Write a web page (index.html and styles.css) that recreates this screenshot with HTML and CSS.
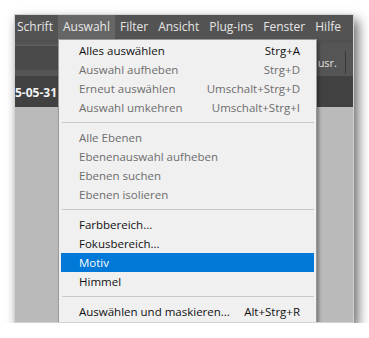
FILE: index.html
```html
<!DOCTYPE html>
<html lang="de">

<head>
    <meta charset="UTF-8">
    <meta name="viewport" content="width=device-width, initial-scale=1.0">
    <title>Auswahl</title>
    <link rel="stylesheet" href="styles.css">
</head>

<body>
    <div class="shot">
        <nav class="menubar">
            <span class="menubar-item">Schrift</span>
            <span class="menubar-item active">Auswahl</span>
            <span class="menubar-item">Filter</span>
            <span class="menubar-item">Ansicht</span>
            <span class="menubar-item">Plug-ins</span>
            <span class="menubar-item">Fenster</span>
            <span class="menubar-item">Hilfe</span>
        </nav>

        <div class="workspace">
            <div class="options-bar">
                <div class="preset-box"></div>
                <div class="options-right">
                    <span class="opt-label">usr.</span>
                    <span class="opt-divider"></span>
                </div>
            </div>
            <div class="tab-bar">
                <span class="doc-tab">5-05-31</span>
            </div>
            <div class="canvas"></div>
        </div>

        <!-- dropdown des Auswahl-Menüs liegt über dem Arbeitsbereich -->
        <ul class="dropdown">
            <li class="row"><span>Alles auswählen</span><span>Strg+A</span></li>
            <li class="row off"><span>Auswahl aufheben</span><span>Strg+D</span></li>
            <li class="row off"><span>Erneut auswählen</span><span>Umschalt+Strg+D</span></li>
            <li class="row off"><span>Auswahl umkehren</span><span>Umschalt+Strg+I</span></li>
            <li class="sep"></li>
            <li class="row off"><span>Alle Ebenen</span></li>
            <li class="row off"><span>Ebenenauswahl aufheben</span></li>
            <li class="row off"><span>Ebenen suchen</span></li>
            <li class="row off"><span>Ebenen isolieren</span></li>
            <li class="sep"></li>
            <li class="row"><span>Farbbereich...</span></li>
            <li class="row"><span>Fokusbereich...</span></li>
            <li class="row selected"><span>Motiv</span></li>
            <li class="row"><span>Himmel</span></li>
            <li class="sep"></li>
            <li class="row"><span>Auswählen und maskieren...</span><span>Alt+Strg+R</span></li>
        </ul>
    </div>
</body>

</html>
```

FILE: styles.css
```css
* {
    margin: 0;
    padding: 0;
    box-sizing: border-box;
}

body {
    background-color: #fff;
    font-family: "Open Sans", "Noto Sans", sans-serif;
}

.shot {
    position: relative;
    width: 340px;
    height: 309px;
    margin: 14px 0 0 14px;
    display: flex;
    flex-direction: column;
    border: 1px solid rgba(255, 255, 255, 0.35);
    background-color: #bababa;
    box-shadow: 4px 6px 11px rgba(0, 0, 0, 0.6);
    overflow: hidden;
}

.menubar {
    display: flex;
    height: 24px;
    background-color: #535353;
    padding-left: 0;
    white-space: nowrap;
}

.menubar-item {
    padding: 0 5px;
    color: #e6e6e6;
    font-size: 12px;
    line-height: 24px;
}

.menubar-item:first-child {
    padding-left: 2px;
}

.menubar-item.active {
    background-color: #666;
}

.workspace {
    flex: 1;
    display: flex;
    flex-direction: column;
}

.options-bar {
    height: 37px;
    display: flex;
    justify-content: space-between;
    background-color: #555;
    border-top: 4px solid #515151;
}

.preset-box {
    width: 43px;
    height: 25px;
    margin-top: 2px;
    background-color: #4a4a4a;
    border-top: 1px solid #606060;
}

.options-right {
    display: flex;
    align-items: flex-end;
    gap: 8px;
    padding-right: 7px;
    padding-bottom: 2px;
}

.opt-label {
    color: #e0e0e0;
    font-size: 11px;
    line-height: 22px;
}

.opt-divider {
    width: 1px;
    height: 23px;
    background-color: #3a3a3a;
}

.tab-bar {
    height: 31px;
    display: flex;
    background-color: #414141;
}

.doc-tab {
    color: #f2f2f2;
    font-size: 12px;
    font-weight: 700;
    line-height: 33px;
    padding-left: 0;
}

.canvas {
    flex: 1;
    background-color: #bababa;
}

.dropdown {
    position: absolute;
    left: 43px;
    top: 24px;
    width: 259px;
    height: 300px;
    list-style: none;
    padding: 1px 2px 0;
    background-color: #f0f0f0;
    border: 1px solid #9a9a9a;
    box-shadow: 2px 2px 3px rgba(0, 0, 0, 0.35);
    font-size: 11.5px;
    color: #111;
}

.row {
    display: flex;
    justify-content: space-between;
    height: 19px;
    line-height: 19px;
    padding: 0 14px 0 18px;
    white-space: nowrap;
}

.row.off {
    color: #6d6d6d;
}

.row.selected {
    background-color: #0078d7;
    color: #fff;
}

.sep {
    height: 11px;
    padding-top: 5px;
}

.sep::before {
    content: "";
    display: block;
    height: 1px;
    margin-left: 1px;
    background-color: #c9c9c9;
}
```
